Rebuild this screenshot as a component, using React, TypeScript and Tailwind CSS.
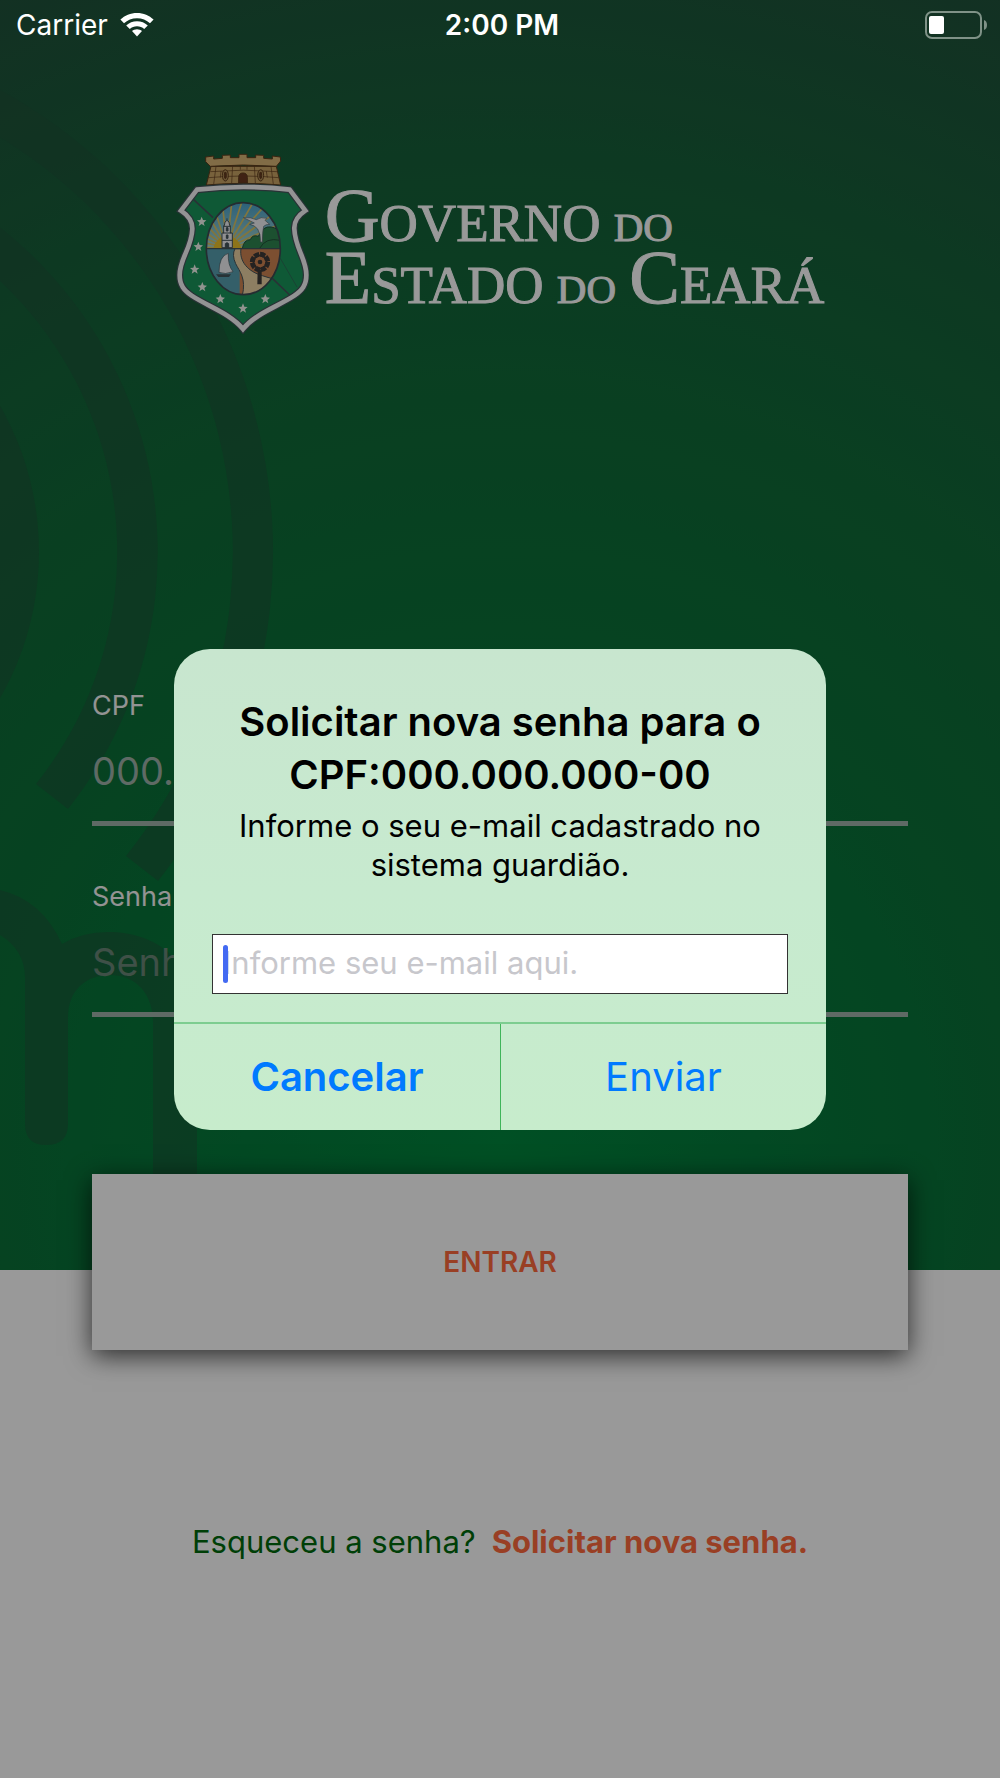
import React, { useState } from 'react';

const STARS = [
  [122, 250],
  [112, 325],
  [101, 393],
  [124, 446],
  [178, 482],
  [246, 510],
  [313, 482],
];

const RAYS = [0, 12, 24, 36, 48, 60, 72, 84, 96, 108, 120, 132, 144, 156, 168, 180];

const Background = () => (
  <svg
    className="absolute inset-0 h-full w-full"
    viewBox="0 0 1000 1270"
    preserveAspectRatio="none"
    aria-hidden="true"
  >
    <defs>
      <radialGradient
        id="glow"
        gradientUnits="userSpaceOnUse"
        cx="500"
        cy="1140"
        r="1280"
      >
        <stop offset="0" stopColor="#00853c" />
        <stop offset="0.2" stopColor="#047a3b" />
        <stop offset="0.4" stopColor="#0a7038" />
        <stop offset="0.58" stopColor="#106a38" />
        <stop offset="0.75" stopColor="#16613a" />
        <stop offset="1" stopColor="#21503b" />
      </radialGradient>
    </defs>
    <rect width="1000" height="1270" fill="url(#glow)" />
    <g fill="#1f5239" fillOpacity="0.5">
      <circle cx="-255" cy="552" r="294" />
      <path d="M-255 139A413 413 0 0 1 68 809L36 784A372 372 0 0 0 -255 180Z" />
      <path d="M-255 24A528 528 0 0 1 158 881L126 856A486 486 0 0 0 -255 66Z" />
      <path d="M0 890Q42 900 62 944Q82 932 108 932C160 932 197 965 197 1022V1270H153V1022C153 992 134 975 110 975C86 975 68 990 68 1018V1124Q68 1145 46 1145Q25 1145 25 1124V978Q25 950 0 935Z" />
    </g>
  </svg>
);

const CoatOfArms = () => (
  <svg
    className="h-[182px] w-[133px] shrink-0"
    viewBox="45 41 399 546"
    role="img"
    aria-label="Brasão do Ceará"
  >
    <defs>
      <clipPath id="oval">
        <ellipse cx="247" cy="331" rx="111" ry="138" />
      </clipPath>
      <linearGradient id="sky" x1="0" y1="0" x2="0" y2="1">
        <stop offset="0" stopColor="#4aa3cc" />
        <stop offset="1" stopColor="#a9d6cf" />
      </linearGradient>
    </defs>

    {/* mural crown */}
    <g stroke="#5f3d1c" strokeWidth="3" strokeLinejoin="round">
      <path
        d="M150 84H346L359 140Q247 130 136 140Z"
        fill="#c9a365"
      />
      <path
        d="M134 56L158 53V62L184 60V51L208 50V58H234V48H258V58H284V50L308 51V60L334 62V53L358 56L359 68L346 84Q247 76 148 84L134 70Z"
        fill="#d8b475"
      />
      <path
        d="M148 100Q247 91 348 100M143 118Q247 108 353 118M165 84L158 138M215 80L212 134M280 80L283 134M330 84L337 138M238 80V94M258 80V94M180 98L178 118M316 98L319 118"
        fill="none"
        strokeWidth="2"
      />
      <path d="M233 134V118Q233 104 246 104Q259 104 259 118V134Z" fill="#6b3a22" />
      <ellipse cx="193" cy="111" rx="9" ry="17" fill="#b08c58" />
      <ellipse cx="299" cy="111" rx="9" ry="17" fill="#b08c58" />
      <ellipse cx="193" cy="111" rx="3" ry="10" fill="#6b3a22" />
      <ellipse cx="299" cy="111" rx="3" ry="10" fill="#6b3a22" />
    </g>

    {/* shield */}
    <path
      d="M108 154Q247 138 386 154L433 217Q398 240 400 272C402 330 436 360 436 410C436 440 424 455 400 472C350 505 285 525 246 572C207 525 142 505 92 472C68 455 56 440 56 410C56 360 92 330 94 272Q95 240 60 217Z"
      fill="#1a955a"
      stroke="#44545a"
      strokeWidth="21"
    />
    <path
      d="M108 154Q247 138 386 154L433 217Q398 240 400 272C402 330 436 360 436 410C436 440 424 455 400 472C350 505 285 525 246 572C207 525 142 505 92 472C68 455 56 440 56 410C56 360 92 330 94 272Q95 240 60 217Z"
      fill="none"
      stroke="#f5f5f7"
      strokeWidth="14"
    />
    <path
      d="M98 184L156 238M334 420L386 470"
      stroke="#44545a"
      strokeWidth="5"
    />
    <path d="M358 360L408 446" stroke="#2b6f58" strokeWidth="3" />

    <g fill="#f2f5ee">
      {STARS.map(([x, y]) => (
        <path
          key={`${x}-${y}`}
          transform={`translate(${x} ${y})`}
          d="M0 -15L4 -5L14 -4L6 3L9 13L0 7L-9 13L-6 3L-14 -4L-4 -5Z"
        />
      ))}
    </g>

    {/* landscape inside the oval */}
    <g clipPath="url(#oval)">
      <rect x="136" y="193" width="222" height="140" fill="url(#sky)" />
      <g stroke="#d9c463" strokeWidth="5">
        {RAYS.map(angle => (
          <path
            key={angle}
            d="M198 328H400"
            transform={`rotate(${-angle} 198 328)`}
          />
        ))}
      </g>
      <circle cx="199" cy="336" r="42" fill="#ecc12a" />
      <path
        d="M244 331Q248 304 268 304Q274 288 292 294Q306 262 330 266Q350 268 362 290V331Z"
        fill="#2f8551"
        stroke="#22533a"
        strokeWidth="3"
      />
      <path d="M296 330Q314 296 358 306" fill="none" stroke="#22533a" strokeWidth="3" />
      <rect x="136" y="331" width="112" height="140" fill="#579fb0" />
      <rect x="236" y="331" width="124" height="140" fill="#cf8452" />
      <path
        d="M222 331H240C234 370 262 400 304 412Q340 424 360 426V472H244C256 420 236 400 224 376Q212 350 222 331Z"
        fill="#ecd2a4"
        stroke="#44545a"
        strokeWidth="3"
      />
      <path d="M136 331H360" stroke="#44545a" strokeWidth="4" />

      <g fill="#f0f1f4" stroke="#44545a" strokeWidth="3">
        <path d="M183 328V284H188V262H190Q190 248 198 246Q206 248 206 262H208V284H214V328Z" />
        <path d="M183 306H214M186 284H211M188 264H208" />
        <path d="M193 328V316Q198 310 203 316V328Z" fill="#44545a" />
        <path d="M196 290H201V300H196ZM196 268H201V278H196Z" fill="#44545a" />
        <path d="M198 246V240" />
      </g>
      <path
        d="M247 238Q270 236 286 244Q300 234 318 240L312 246L326 258Q314 258 308 264Q304 282 304 312L298 310Q300 288 290 272Q280 260 266 258L280 254Q264 246 247 238Z"
        fill="#f0f1f4"
        stroke="#56646b"
        strokeWidth="2"
      />
      <path
        d="M202 345Q174 352 174 402Q192 410 216 400Q200 380 202 345Z"
        fill="#f0f1f4"
        stroke="#44545a"
        strokeWidth="2"
      />
      <path d="M165 408H210L204 416H172Z" fill="#44545a" />
      <circle
        cx="297"
        cy="371"
        r="23"
        fill="none"
        stroke="#3d3a38"
        strokeWidth="15"
        strokeDasharray="15 3"
      />
      <circle cx="297" cy="371" r="20" fill="none" stroke="#3d3a38" strokeWidth="5" />
      <circle cx="297" cy="371" r="7" fill="#3d3a38" />
      <path d="M290 394H302V438H289Z" fill="#3d3a38" />
    </g>
    <ellipse
      cx="247"
      cy="331"
      rx="111"
      ry="138"
      fill="none"
      stroke="#3c4a52"
      strokeWidth="5"
    />
  </svg>
);

const Logo = () => (
  <div className="flex items-start justify-center gap-4">
    <CoatOfArms />
    <h1 className="pt-10 font-['Liberation_Serif',serif] text-[53px] leading-[62px] whitespace-nowrap text-white uppercase [-webkit-text-stroke:1px_white]">
      <span className="block">
        <span className="text-[76px] leading-0">G</span>overno{' '}
        <span className="text-[41px] leading-0">do</span>
      </span>
      <span className="block">
        <span className="text-[76px] leading-0">E</span>stado{' '}
        <span className="text-[41px] leading-0">do</span>{' '}
        <span className="text-[76px] leading-0">C</span>eará
      </span>
    </h1>
  </div>
);

const StatusBar = () => (
  <div className="absolute inset-x-0 top-0 z-20 grid h-[50px] grid-cols-3 items-center pr-3 pl-4 text-[28px] text-white">
    <div className="flex items-center gap-3">
      <span>Carrier</span>
      <svg className="h-6 w-[34px]" viewBox="0 0 34 24" fill="#fff" aria-hidden="true">
        <path d="M17 0C10.500 0 4.700 2.500 .4 6.600L4 10.300C7.400 7.100 12 5.200 17 5.200S26.600 7.100 30 10.300L33.600 6.600C29.300 2.500 23.500 0 17 0Z" />
        <path d="M17 8.200C12.900 8.200 9.100 9.800 6.200 12.400L9.800 16C11.700 14.300 14.200 13.300 17 13.300S22.300 14.300 24.200 16L27.800 12.400C24.900 9.800 21.100 8.200 17 8.200Z" />
        <path d="M17 16.200C15.100 16.200 13.300 16.900 12 18.100L17 23.600L22 18.100C20.700 16.900 18.900 16.200 17 16.200Z" />
      </svg>
    </div>
    <span className="text-center font-semibold">2:00 PM</span>
    <svg className="h-7 w-16 justify-self-end" viewBox="0 0 64 28" aria-hidden="true">
      <rect
        x="2"
        y="1"
        width="55"
        height="26"
        rx="6"
        fill="none"
        stroke="#7f9287"
        strokeWidth="2"
      />
      <rect x="5" y="5" width="15" height="18" rx="2" fill="#fff" />
      <path d="M60 9Q63 10 63 14Q63 18 60 19Z" fill="#7f9287" />
    </svg>
  </div>
);

const Field = ({
  id,
  label,
  type,
  tone,
}: {
  id: string;
  label: string;
  type: string;
  tone: string;
}) => {
  const [value, setValue] = useState('');

  return (
    <div className="flex flex-col">
      <label htmlFor={id} className="text-[27px] leading-8 text-[#f5f5f5]">
        {label}
      </label>
      <input
        id={id}
        type={type}
        value={value}
        onChange={e => setValue(e.target.value)}
        placeholder={type == 'password' ? 'Senha' : '000.000.000-00'}
        className={`h-[104px] w-full border-b-[5px] border-[#9fb1a8] bg-transparent pb-0.5 text-[38px] text-white outline-none ${tone}`}
      />
    </div>
  );
};

const Alert = () => {
  const [email, setEmail] = useState('');

  return (
    <div className="absolute inset-0 z-10 flex items-center justify-center bg-black/40">
      <div
        role="dialog"
        aria-labelledby="alert-title"
        className="flex w-[652px] flex-col overflow-hidden rounded-[36px] bg-linear-to-b from-[#c8e6cf] via-[#c7eacf] to-[#c7eccc] text-black"
      >
        <div className="px-[38px] pt-[46px] pb-7 text-center">
          <h2
            id="alert-title"
            className="text-[40px] leading-[53px] font-semibold"
          >
            Solicitar nova senha para o CPF:000.000.000-00
          </h2>
          <p className="px-4 pt-[5px] text-[31px] leading-[39px]">
            Informe o seu e-mail cadastrado no sistema guardião.
          </p>
          <div className="relative mt-[50px]">
            <input
              type="email"
              aria-label="E-mail"
              value={email}
              onChange={e => setEmail(e.target.value)}
              placeholder="Informe seu e-mail aqui."
              className="block h-[60px] w-full border border-[#333] bg-white px-2.5 pb-0.5 text-[31px] outline-none placeholder:text-[#c7c7cc]"
            />
            <span className="absolute top-[11px] left-[11px] h-[38px] w-[5px] rounded-full bg-[#436af2]"></span>
          </div>
        </div>
        <div className="grid h-[108px] grid-cols-2 border-t-2 border-[#7dcd90] text-[40px] text-[#007aff]">
          <button className="font-semibold">Cancelar</button>
          <button className="border-l border-[#3fb45a]">Enviar</button>
        </div>
      </div>
    </div>
  );
};

const App = () => {
  return (
    <div className="relative min-h-screen bg-white font-['Inter',sans-serif]">
      <StatusBar />
      <div className="relative overflow-hidden bg-[#0a7038]">
        <Background />
        <div className="relative px-[92px] pt-[152px] pb-[253px]">
          <Logo />
          <div className="flex flex-col gap-[55px] pt-[356px]">
            <Field
              id="cpf"
              label="CPF"
              type="text"
              tone="placeholder:text-[#9fb1a8]"
            />
            <Field
              id="senha"
              label="Senha"
              type="password"
              tone="placeholder:text-[#6a8577]"
            />
          </div>
        </div>
      </div>
      <div className="relative -mt-24 flex flex-col gap-[170px] px-[92px]">
        <button className="h-[176px] w-full bg-white text-[28px] font-semibold text-[#ff6a3d] shadow-[0_6px_24px_rgba(0,0,0,0.7)]">
          ENTRAR
        </button>
        <p className="flex justify-center gap-4 text-[31px] leading-[44px] whitespace-nowrap text-[#006a0c]">
          Esqueceu a senha?
          <a href="#senha" className="font-bold text-[#ff6a3d]">
            Solicitar nova senha.
          </a>
        </p>
      </div>
      <Alert />
    </div>
  );
};

export default App;
